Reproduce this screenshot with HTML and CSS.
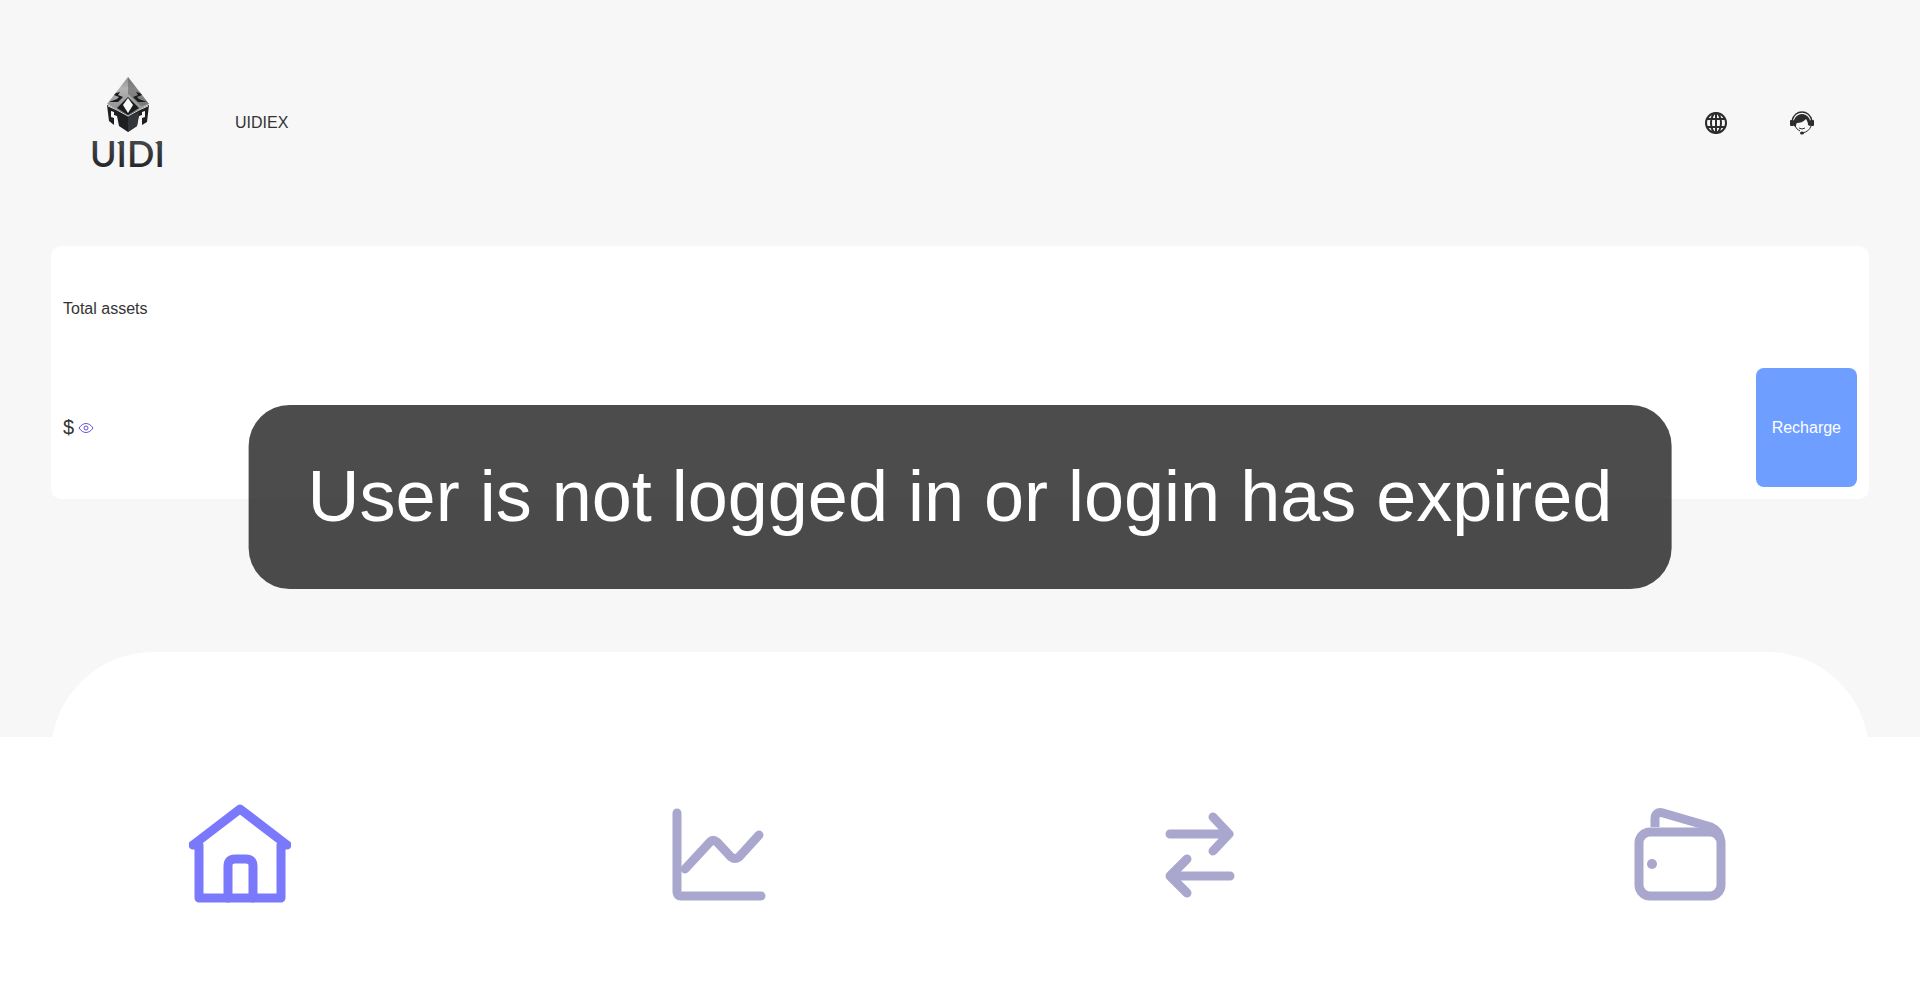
FILE: index.html
```html
<!DOCTYPE html>
<html lang="en">
<head>
    <meta charset="UTF-8">
    <meta name="viewport" content="width=device-width, initial-scale=1.0">
    <title>UIDIEX</title>
    <link rel="stylesheet" href="styles.css">
</head>
<body>
    <header class="header">
        <svg class="logo" viewBox="0 0 102 102" role="img" aria-label="UIDI">
            <defs>
                <linearGradient id="steel" x1="0" y1="0" x2="0" y2="1">
                    <stop offset="0" stop-color="#8c8c8c"/>
                    <stop offset="0.3" stop-color="#b4b4b4"/>
                    <stop offset="1" stop-color="#8a8a8a"/>
                </linearGradient>
                <linearGradient id="ink" x1="0" y1="0" x2="0" y2="1">
                    <stop offset="0" stop-color="#505255"/>
                    <stop offset="1" stop-color="#1c1d20"/>
                </linearGradient>
            </defs>
            <!-- lower half of the helmet -->
            <path fill="#1d1f21" d="M30 33 L51 42 L72 33 L70 50 L65 53 L65 43 L62 44 L60 54 L51 60 L42 54 L40 44 L37 43 L37 53 L32 49 Z"/>
            <path fill="#f7f7f7" d="M34 39 L37 40 V46 L34 45 Z M68 39 L65 40 V46 L68 45 Z"/>
            <path fill="#33363a" d="M51 44 V60 L60 54 L62 40 Z"/>
            <!-- upper half -->
            <path fill="url(#steel)" d="M51 5 L72 32 L51 43 L30 32 Z"/>
            <path fill="#666" fill-opacity="0.6" d="M51 5 L72 32 L64 34 L51 22 Z"/>
            <path fill="#1b1c1e" d="M39 21 L43 20 L41 23 L46 25 L41 30 L32 30 L40 27 L42 25 L37 23 Z M63 21 L59 20 L61 23 L56 25 L61 30 L70 30 L62 27 L60 25 L65 23 Z"/>
            <path fill="#1b1c1e" d="M40 36 L51 25 L62 36 L51 43 Z"/>
            <path fill="#fafafa" d="M51 26 L56 33 L51 41 L46 33 Z"/>
            <path fill="none" stroke="#d8d8d8" d="M31 34 L40 38 L51 44 L62 38 L71 34"/>
            <text class="logo-text" x="13" y="95" fill="url(#ink)">UIDI</text>
            <path fill="#46484b" d="M40 70 H47 V74 H44 Z M78 70 H85 V74 H82 Z"/>
        </svg>
        <span class="title">UIDIEX</span>
        <nav class="tools">
            <a href="#" aria-label="Language">
                <svg class="tool-icon" viewBox="0 0 24 24" fill="none" stroke="#2c2c2c" stroke-width="2">
                    <circle cx="12" cy="12" r="10"/>
                    <ellipse cx="12" cy="12" rx="5" ry="10"/>
                    <path d="M12 2 V22 M3 8 H21 M3 16 H21"/>
                </svg>
            </a>
            <a href="#" aria-label="Customer service">
                <svg class="tool-icon" viewBox="0 0 24 24">
                    <path fill="none" stroke="#2c2c2c" stroke-width="1.4" d="M2 10 C4 -2 20 -2 22 10"/>
                    <path fill="none" stroke="#2c2c2c" d="M21 15 Q19 21 12 22"/>
                    <path fill="#2c2c2c" d="M4 15 C2 8 7 3 12 3 C17 3 22 8 20 15 L18 14 C18 11 17 10 16 8 C13 11 10 12 7 12 C6 13 6 14 6 16 Z"/>
                    <rect fill="#2c2c2c" x="0" y="9" width="4" height="6" rx="1"/>
                    <rect fill="#2c2c2c" x="20" y="9" width="4" height="6" rx="1"/>
                    <path fill="none" stroke="#2c2c2c" d="M5 15 Q7 19 10 20 M9 17 Q12 19 15 17"/>
                    <ellipse fill="#2c2c2c" cx="12" cy="22" rx="2" ry="1.5"/>
                </svg>
            </a>
        </nav>
    </header>

    <main>
        <section class="assets">
            <div class="assets-title">Total assets</div>
            <div class="assets-row">
                <span class="currency">$</span>
                <button class="eye" type="button" aria-label="Show balance">
                    <svg viewBox="0 0 16 16" fill="none" stroke="#6352dc">
                        <path d="M1 8 C5 2 11 2 15 8 C11 14 5 14 1 8 Z"/>
                        <circle cx="8" cy="8" r="2"/>
                    </svg>
                </button>
                <button class="recharge" type="button">Recharge</button>
            </div>
        </section>
        <section class="panel"></section>
    </main>

    <nav class="tabbar">
        <a class="active" href="#" aria-label="Home">
            <svg viewBox="0 0 102 102">
                <path d="M4 41 H10 V94 H92 V41 H98 M4 41 L51 5 L98 41"/>
                <path d="M39 94 V62 Q39 55 46 55 H57 Q64 55 64 62 V94"/>
            </svg>
        </a>
        <a href="#" aria-label="Market">
            <svg viewBox="0 0 102 102">
                <path d="M8 9 V88 Q8 92 12 92 H92"/>
                <path d="M16 65 L41 38 Q44 35 48 38 L62 53 Q66 56 70 53 L90 31"/>
            </svg>
        </a>
        <a href="#" aria-label="Trade">
            <svg viewBox="0 0 102 102">
                <path d="M21 30 H80 M64 13 L80 30 L64 47"/>
                <path d="M81 72 H22 M38 55 L21 72 L38 89"/>
            </svg>
        </a>
        <a href="#" aria-label="Assets">
            <svg viewBox="0 0 102 102">
                <rect x="10" y="28" width="82" height="64" rx="11"/>
                <path class="butt" d="M26 23 V15 Q26 7 34 9 L82 23 Q91 27 91 36"/>
                <circle class="dot" cx="23" cy="60" r="5"/>
            </svg>
        </a>
    </nav>

    <div class="toast" role="alert">User is not logged in or login has expired</div>
</body>
</html>
```

FILE: styles.css
```css
body {
    margin: 0;
    min-height: 100vh;
    display: flex;
    flex-direction: column;
    background: #f7f7f7;
    color: #333;
    font-family: "Liberation Sans", Arial, sans-serif;
    font-size: 16px;
}
.header {
    display: flex;
    align-items: center;
    height: 246px;
    padding: 0 106px 0 77px;
}
.logo {
    width: 102px;
    height: 102px;
}
.logo-text {
    font-family: Lato, sans-serif;
    font-size: 36px;
    font-weight: 600;
}
.title {
    margin-left: 56px;
}
.tools {
    display: flex;
    gap: 62px;
    margin-left: auto;
}
.tool-icon {
    display: block;
    width: 24px;
    height: 24px;
}
main {
    flex: 1;
    display: flex;
    flex-direction: column;
    padding: 0 51px;
}
.assets {
    padding: 12px;
    border-radius: 10px;
    background: #fff;
}
.assets-title {
    line-height: 102px;
}
.assets-row {
    display: flex;
    align-items: center;
    margin-top: 8px;
}
.currency {
    font-size: 20px;
}
button {
    border: none;
    font: inherit;
    cursor: pointer;
}
.eye {
    width: 16px;
    height: 16px;
    margin-left: 4px;
    padding: 0;
    background: none;
}
.eye svg {
    display: block;
}
.recharge {
    height: 119px;
    margin-left: auto;
    padding: 0 16px;
    border-radius: 8px;
    background: #6e9eff;
    color: #fff;
}
.panel {
    flex: 1;
    margin-top: 153px;
    border-radius: 102px 102px 0 0;
    background: #fff;
}
/* bottom navigation */
.tabbar {
    position: fixed;
    left: 0;
    right: 0;
    bottom: 0;
    display: grid;
    grid-template-columns: repeat(4, 1fr);
    place-items: center;
    height: 256px;
    background: #fff;
}
.tabbar svg {
    display: block;
    width: 102px;
    height: 102px;
    margin-bottom: 20px;
    fill: none;
    stroke: #a9a7cd;
    stroke-width: 9px;
    stroke-linecap: round;
    stroke-linejoin: round;
}
.tabbar .active svg {
    stroke: #7b79fb;
}
.tabbar .butt {
    stroke-linecap: butt;
}
.tabbar .dot {
    fill: #a9a7cd;
    stroke: none;
}
.toast {
    position: fixed;
    top: 50%;
    left: 50%;
    transform: translate(-50%, -50%);
    padding: 50px 59px 52px;
    border-radius: 41px;
    background: rgba(0, 0, 0, 0.7);
    color: #fff;
    font-size: 72px;
    line-height: 82px;
    white-space: nowrap;
}
```
